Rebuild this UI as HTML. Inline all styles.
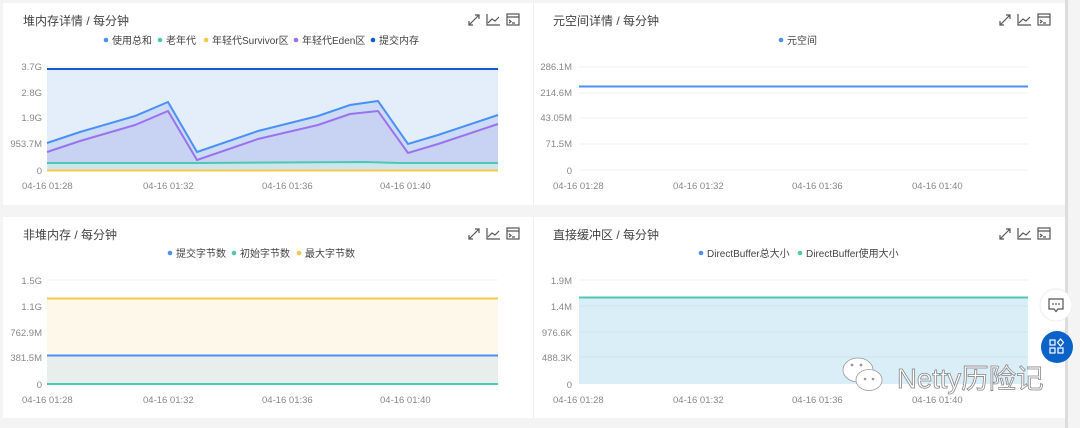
<!DOCTYPE html>
<html><head><meta charset="utf-8"><style>
html,body{margin:0;padding:0;background:#f4f4f4;}
svg{display:block;font-family:"Liberation Sans","Noto Sans CJK SC",sans-serif;}
.t{font-size:12px;fill:#444;}
.lg{font-size:10px;fill:#444;}
.ax{font-size:9.5px;fill:#888;}
.yl{font-size:9.5px;fill:#888;text-anchor:end;}
.g{stroke:#f0f0f0;stroke-width:1;}
.ic{fill:none;stroke:#555;stroke-width:1.2;}
</style></head><body>
<svg width="1080" height="428" viewBox="0 0 1080 428">
<defs>
<g id="icons">
 <path class="ic" d="M0 10 L10 0 M6 0 H10 V4 M0 6 V10 H4"/>
 <path class="ic" d="M18 -1 V10 H31 M19 8 L23 4 L26 6 L30 2"/>
 <rect class="ic" x="38" y="-1" width="12" height="11"/>
 <path class="ic" d="M38 2 H50 M40 5 L42 6.5 L40 8 M43 8 H46"/>
</g>
</defs>
<rect x="0" y="0" width="1080" height="428" fill="#f4f4f4"/>
<rect x="3" y="3" width="1062" height="202" fill="#fff"/>
<rect x="3" y="217" width="1062" height="201" fill="#fff"/>
<line x1="533.5" y1="3" x2="533.5" y2="205" stroke="#eee"/>
<line x1="533.5" y1="217" x2="533.5" y2="418" stroke="#eee"/>
<rect x="1065" y="0" width="3" height="428" fill="#ddd"/>

<!-- Panel 1 -->
<text class="t" x="23" y="25">堆内存详情 / 每分钟</text>
<use href="#icons" x="469" y="15"/>
<g class="lg">
<circle cx="106" cy="40" r="2.3" fill="#4a90f5"/><text x="112" y="44">使用总和</text>
<circle cx="160" cy="40" r="2.3" fill="#4cc9b0"/><text x="166" y="44">老年代</text>
<circle cx="206" cy="40" r="2.3" fill="#f7c84a"/><text x="212" y="44">年轻代Survivor区</text>
<circle cx="296" cy="40" r="2.3" fill="#9b72ee"/><text x="302" y="44">年轻代Eden区</text>
<circle cx="373" cy="40" r="2.3" fill="#0b5fd0"/><text x="379" y="44">提交内存</text>
</g>
<g class="g"><line x1="47" y1="67" x2="498" y2="67"/><line x1="47" y1="93" x2="498" y2="93"/><line x1="47" y1="118" x2="498" y2="118"/><line x1="47" y1="144" x2="498" y2="144"/></g>
<g class="yl"><text x="42" y="70">3.7G</text><text x="42" y="96">2.8G</text><text x="42" y="121">1.9G</text><text x="42" y="147">953.7M</text><text x="42" y="174">0</text></g>
<rect x="47" y="69" width="451" height="102" fill="#e4eefb"/>
<polygon points="47,143 80,132 135,116 168,102 197,152 258,131 318,116 350,105 378,101 408,144 438,135 498,115 498,171 47,171" fill="#cddcf6"/>
<polygon points="47,152 80,141 135,125 168,111 197,160 258,139 318,125 350,114 378,111 408,153 438,144 498,124 498,171 47,171" fill="#c8d3f4"/>
<rect x="47" y="163" width="451" height="8" fill="#cde6ee"/>
<line x1="47" y1="69" x2="498" y2="69" stroke="#0b5fd0" stroke-width="2"/>
<polyline points="47,143 80,132 135,116 168,102 197,152 258,131 318,116 350,105 378,101 408,144 438,135 498,115" fill="none" stroke="#4a90f5" stroke-width="2"/>
<polyline points="47,152 80,141 135,125 168,111 197,160 258,139 318,125 350,114 378,111 408,153 438,144 498,124" fill="none" stroke="#9b72ee" stroke-width="2"/>
<polyline points="47,163 200,163 365,162 400,163 498,163" fill="none" stroke="#4cc9b0" stroke-width="2"/>
<line x1="47" y1="170.5" x2="498" y2="170.5" stroke="#f7c84a" stroke-width="2"/>
<g class="ax"><text x="22" y="189">04-16 01:28</text><text x="143" y="189">04-16 01:32</text><text x="262" y="189">04-16 01:36</text><text x="380" y="189">04-16 01:40</text></g>

<!-- Panel 2 -->
<text class="t" x="553" y="25">元空间详情 / 每分钟</text>
<use href="#icons" x="1000" y="15"/>
<circle cx="781" cy="40" r="2.3" fill="#4a90f5"/><text class="lg" x="787" y="44">元空间</text>
<g class="g"><line x1="579" y1="67" x2="1028" y2="67"/><line x1="579" y1="93" x2="1028" y2="93"/><line x1="579" y1="118" x2="1028" y2="118"/><line x1="579" y1="144" x2="1028" y2="144"/><line x1="579" y1="170" x2="1028" y2="170"/></g>
<g class="yl"><text x="572" y="70">286.1M</text><text x="572" y="96">214.6M</text><text x="572" y="121">43.05M</text><text x="572" y="147">71.5M</text><text x="572" y="174">0</text></g>
<line x1="579" y1="86.5" x2="1028" y2="86.5" stroke="#4a90f5" stroke-width="2"/>
<g class="ax"><text x="553" y="189">04-16 01:28</text><text x="673" y="189">04-16 01:32</text><text x="792" y="189">04-16 01:36</text><text x="912" y="189">04-16 01:40</text></g>

<!-- Panel 3 -->
<text class="t" x="23" y="239">非堆内存 / 每分钟</text>
<use href="#icons" x="469" y="229"/>
<g class="lg">
<circle cx="170" cy="253" r="2.3" fill="#4a90f5"/><text x="176" y="257">提交字节数</text>
<circle cx="234" cy="253" r="2.3" fill="#4cc9b0"/><text x="240" y="257">初始字节数</text>
<circle cx="299" cy="253" r="2.3" fill="#f7c84a"/><text x="305" y="257">最大字节数</text>
</g>
<g class="g"><line x1="47" y1="280" x2="498" y2="280"/><line x1="47" y1="306" x2="498" y2="306"/><line x1="47" y1="332" x2="498" y2="332"/></g>
<g class="yl"><text x="42" y="284">1.5G</text><text x="42" y="310">1.1G</text><text x="42" y="336">762.9M</text><text x="42" y="361">381.5M</text><text x="42" y="388">0</text></g>
<rect x="47" y="298" width="451" height="86" fill="#fdf8ea"/>
<rect x="47" y="355" width="451" height="29" fill="#e8eeeb"/>
<line x1="47" y1="298.5" x2="498" y2="298.5" stroke="#f7c84a" stroke-width="2"/>
<line x1="47" y1="355.5" x2="498" y2="355.5" stroke="#4a90f5" stroke-width="2"/>
<line x1="47" y1="384" x2="498" y2="384" stroke="#4cc9b0" stroke-width="2"/>
<g class="ax"><text x="22" y="403">04-16 01:28</text><text x="143" y="403">04-16 01:32</text><text x="262" y="403">04-16 01:36</text><text x="380" y="403">04-16 01:40</text></g>

<!-- Panel 4 -->
<text class="t" x="553" y="239">直接缓冲区 / 每分钟</text>
<use href="#icons" x="1000" y="229"/>
<g class="lg">
<circle cx="701" cy="253" r="2.3" fill="#4a90f5"/><text x="707" y="257">DirectBuffer总大小</text>
<circle cx="800" cy="253" r="2.3" fill="#4cc9b0"/><text x="806" y="257">DirectBuffer使用大小</text>
</g>
<g class="g"><line x1="579" y1="280" x2="1028" y2="280"/></g>
<g class="yl"><text x="572" y="284">1.9M</text><text x="572" y="310">1.4M</text><text x="572" y="336">976.6K</text><text x="572" y="361">488.3K</text><text x="572" y="388">0</text></g>
<rect x="579" y="297" width="449" height="87" fill="#d9eef6"/>
<g stroke="#cfe5ee"><line x1="579" y1="306" x2="1028" y2="306"/><line x1="579" y1="332" x2="1028" y2="332"/><line x1="579" y1="357" x2="1028" y2="357"/></g>
<line x1="579" y1="297.5" x2="1028" y2="297.5" stroke="#4cc9b0" stroke-width="2"/>
<g class="ax"><text x="553" y="403">04-16 01:28</text><text x="673" y="403">04-16 01:32</text><text x="792" y="403">04-16 01:36</text><text x="912" y="403">04-16 01:40</text></g>

<!-- watermark -->
<g fill="#fff" stroke="#999" stroke-width="0.8">
<ellipse cx="858" cy="370" rx="15" ry="12"/>
<ellipse cx="869" cy="380" rx="13" ry="10.5"/>
</g>
<g fill="#999"><circle cx="852" cy="365" r="1.4"/><circle cx="861" cy="365" r="1.4"/><circle cx="865" cy="379" r="1.3"/><circle cx="873" cy="379" r="1.3"/></g>
<text x="897" y="388" font-size="27.5" fill="#fff" stroke="#888" stroke-width="0.8">Netty历险记</text>

<!-- floating buttons -->
<circle cx="1056" cy="305" r="16" fill="#fff" stroke="#eee"/>
<path d="M1049 299 H1063 V309 H1058 L1056 311.5 L1054 309 H1049 Z" fill="none" stroke="#555" stroke-width="1.2"/>
<g fill="#555"><circle cx="1053" cy="304" r="0.9"/><circle cx="1056" cy="304" r="0.9"/><circle cx="1059" cy="304" r="0.9"/></g>
<circle cx="1057" cy="347" r="16" fill="#0b63c9"/>
<g fill="none" stroke="#fff" stroke-width="1.2">
<rect x="1050" y="340" width="5" height="5"/><rect x="1050" y="348" width="5" height="5"/><rect x="1058" y="348" width="5" height="5"/>
<path d="M1060.5 339 L1063.5 342.5 L1060.5 346 L1057.5 342.5 Z"/>
</g>
</svg>
</body></html>
